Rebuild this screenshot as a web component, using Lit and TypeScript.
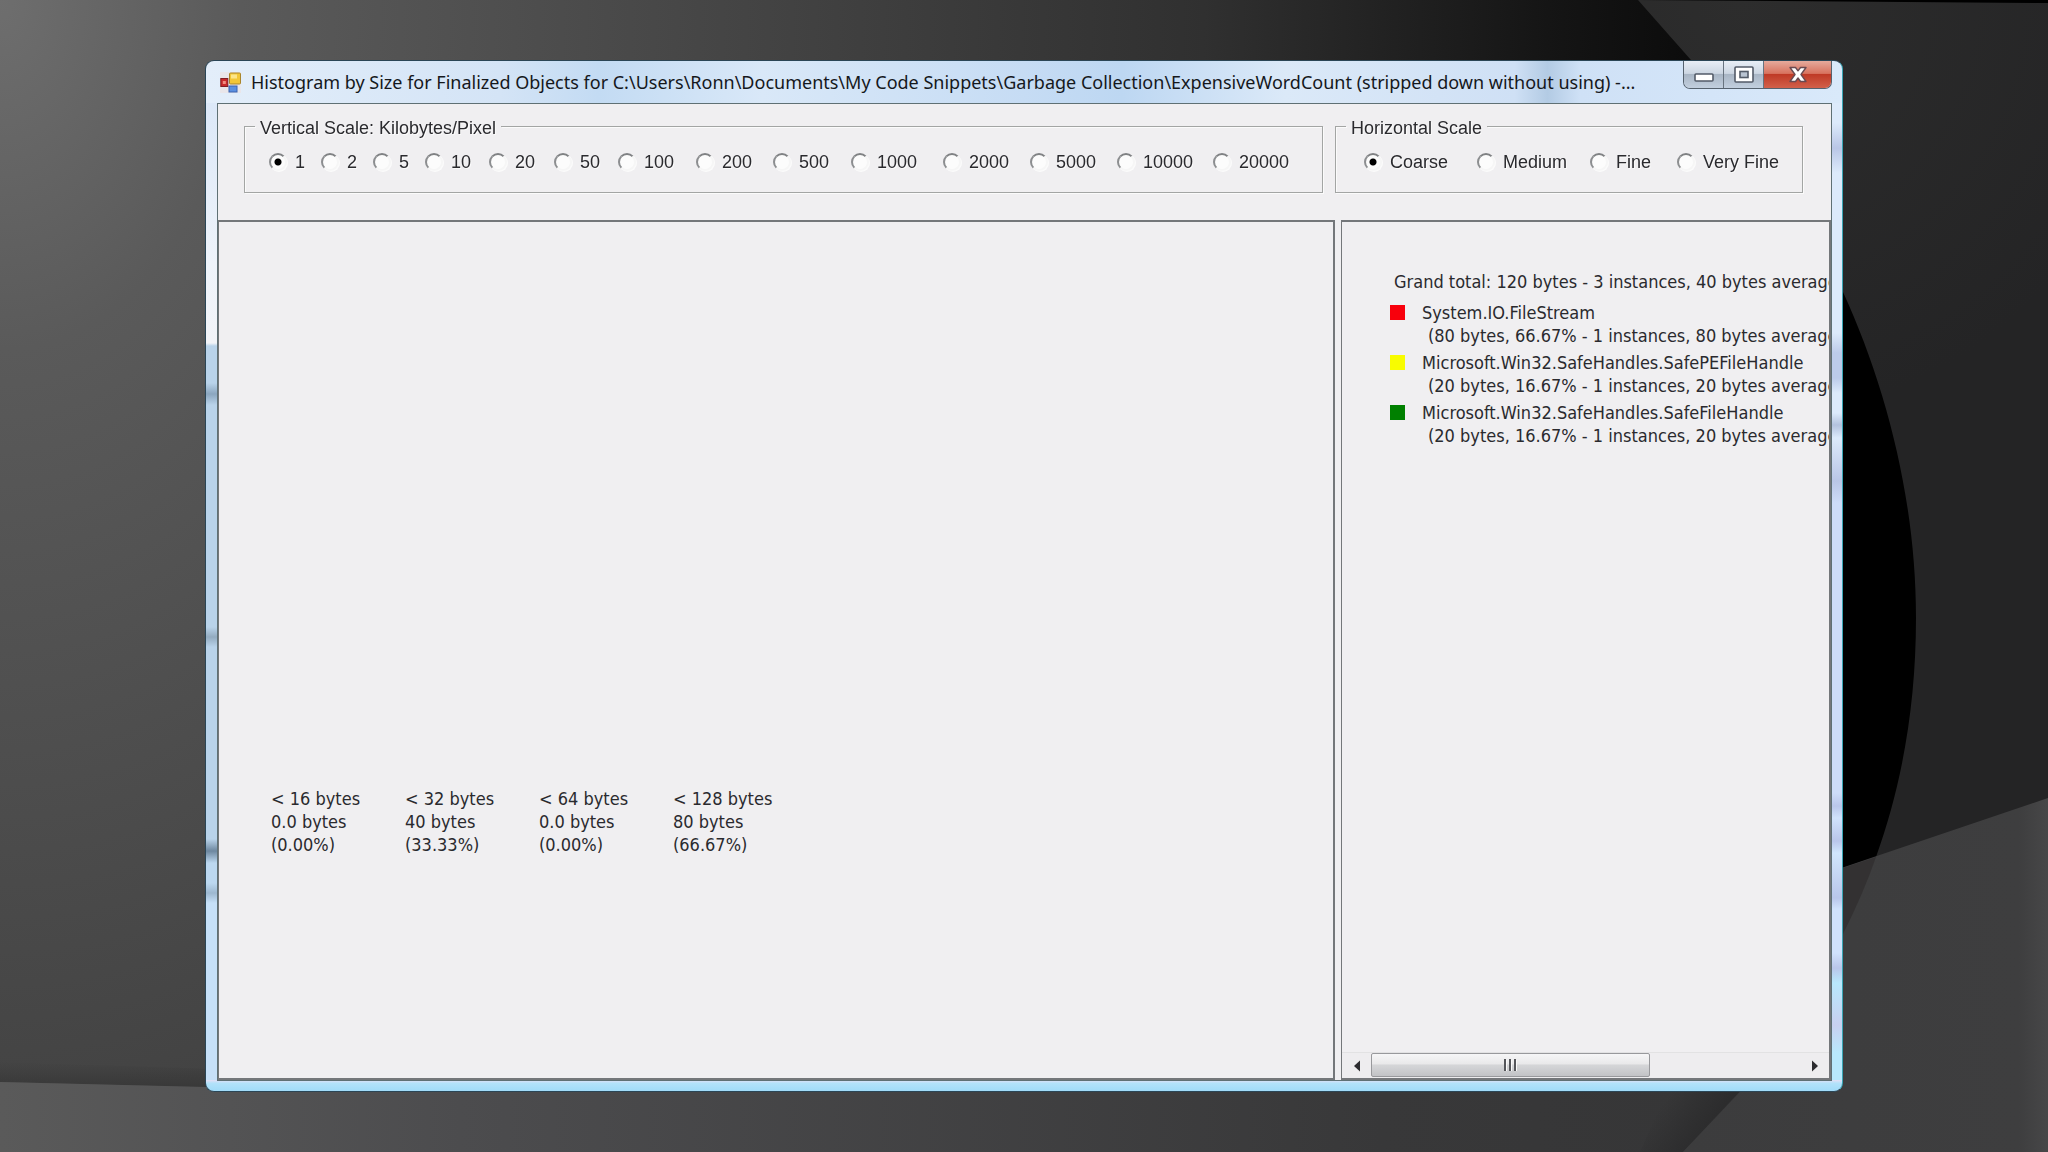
import { LitElement, html, css, svg } from "lit";
import { customElement, property, state } from "lit/decorators.js";

interface Choice {
  label: string;
  width: number;
}

const VERTICAL: Choice[] = [
  { label: "1", width: 52 },
  { label: "2", width: 52 },
  { label: "5", width: 52 },
  { label: "10", width: 64 },
  { label: "20", width: 65 },
  { label: "50", width: 64 },
  { label: "100", width: 78 },
  { label: "200", width: 77 },
  { label: "500", width: 78 },
  { label: "1000", width: 92 },
  { label: "2000", width: 87 },
  { label: "5000", width: 87 },
  { label: "10000", width: 96 },
  { label: "20000", width: 78 },
];

const HORIZONTAL: Choice[] = [
  { label: "Coarse", width: 113 },
  { label: "Medium", width: 113 },
  { label: "Fine", width: 87 },
  { label: "Very Fine", width: 108 },
];

const BUCKETS = [
  ["< 16 bytes", "0.0 bytes", "(0.00%)"],
  ["< 32 bytes", "40 bytes", "(33.33%)"],
  ["< 64 bytes", "0.0 bytes", "(0.00%)"],
  ["< 128 bytes", "80 bytes", "(66.67%)"],
];

const TYPES = [
  { color: "#f8000c", name: "System.IO.FileStream", detail: "(80 bytes, 66.67% - 1 instances, 80 bytes average)" },
  { color: "#f8fc00", name: "Microsoft.Win32.SafeHandles.SafePEFileHandle", detail: "(20 bytes, 16.67% - 1 instances, 20 bytes average)" },
  { color: "#008000", name: "Microsoft.Win32.SafeHandles.SafeFileHandle", detail: "(20 bytes, 16.67% - 1 instances, 20 bytes average)" },
];

@customElement("scale-group")
class ScaleGroup extends LitElement {
  @property() heading = "";
  @property({ attribute: false }) choices: Choice[] = [];
  @state() private selected = 0;

  static styles = css`
    :host {
      display: block;
      font: 18px/20px "Liberation Sans", Arial, sans-serif;
      color: #2a2a2e;
    }
    fieldset {
      margin: 0;
      padding: 16px 10px 20px;
      border: 1px solid #a3a5a4;
      min-width: 0;
      filter: drop-shadow(1px 1px 0 #fbfbfb);
    }
    legend {
      padding: 0 5px;
      height: 20px;
      line-height: 24px;
    }
    .row {
      display: flex;
      padding-left: var(--row-inset, 14px);
    }
    .choice {
      display: flex;
      align-items: center;
      gap: 8px;
      height: 20px;
      white-space: nowrap;
    }
    input {
      appearance: none;
      box-sizing: border-box;
      flex: none;
      width: 18px;
      height: 18px;
      margin: 0;
      border: 2px solid;
      border-color: #808284 #f6f6f6 #f6f6f6 #8c8e90;
      border-radius: 50%;
      background: #fcfcfc;
    }
    input:checked {
      background: radial-gradient(circle, #000 3px, #fcfcfc 4px);
    }
  `;

  render() {
    return html`<fieldset>
      <legend>${this.heading}</legend>
      <div class="row">
        ${this.choices.map(
          (c, i) => html`<label class="choice" style="width:${c.width}px">
            <input type="radio" name="scale" .checked=${i === this.selected} @change=${() => (this.selected = i)} />
            ${c.label}
          </label>`
        )}
      </div>
    </fieldset>`;
  }
}

const backdrop = svg`
  <defs>
    <radialGradient id="sweep" gradientUnits="userSpaceOnUse" cx="0" cy="0" r="1" gradientTransform="scale(1720 2500)">
      <stop offset="0" stop-color="#6e6e6e" />
      <stop offset="0.14" stop-color="#5a5a5a" />
      <stop offset="0.42" stop-color="#454545" />
      <stop offset="0.7" stop-color="#303030" />
      <stop offset="0.9" stop-color="#151515" />
      <stop offset="1" stop-color="#0a0a0a" />
    </radialGradient>
    <linearGradient id="floor" x1="0" x2="1">
      <stop offset="0" stop-color="#5a5a5a" />
      <stop offset="0.25" stop-color="#4c4c4e" />
      <stop offset="0.75" stop-color="#383839" />
      <stop offset="1" stop-color="#353536" />
    </linearGradient>
    <linearGradient id="edge" x1="0" y1="0" x2="0" y2="1">
      <stop offset="0" stop-color="#303030" stop-opacity="0" />
      <stop offset="1" stop-color="#303030" stop-opacity="0.8" />
    </linearGradient>
    <radialGradient id="outer" gradientUnits="userSpaceOnUse" cx="1740" cy="0" r="420">
      <stop offset="0" stop-color="#2d2d2d" />
      <stop offset="1" stop-color="#242425" />
    </radialGradient>
    <linearGradient id="crease" gradientUnits="userSpaceOnUse" x1="1672" y1="1092" x2="1712" y2="1122">
      <stop offset="0" stop-color="#2c2c2d" stop-opacity="0" />
      <stop offset="1" stop-color="#2c2c2d" />
    </linearGradient>
    <linearGradient id="corner" x1="0" x2="1">
      <stop offset="0" stop-color="#3c3c3d" />
      <stop offset="0.92" stop-color="#3e3e3f" />
      <stop offset="1" stop-color="#474748" />
    </linearGradient>
  </defs>
  <rect width="2048" height="1152" fill="url(#sweep)" />
  <path d="M1700 60H2048V1000H1700Z" fill="#000" />
  <path d="M0 1062L620 1082V1098L0 1082Z" fill="url(#edge)" />
  <path d="M0 1082L206 1087H1843V1152H0Z" fill="url(#floor)" />
  <path d="M1638 0L1691 60C1755 130 1808 212 1843 292C1886 386 1916 500 1916 618C1916 705 1902 785 1876 857L1843 934L2048 934V0Z" fill="url(#outer)" />
  <path d="M1640 0H2048V3Z" fill="#000" />
  <path d="M1670 1085H1746L1683 1152H1640Z" fill="url(#crease)" />
  <path d="M1800 882L2048 798V1152H1683L1740 1092L1800 990Z" fill="url(#corner)" />
  <path d="M1843 868L1876 857Q1864 892 1843 934Z" fill="#333132" />
`;

@customElement("app-root")
class AppRoot extends LitElement {
  static styles = css`
    :host {
      display: block;
      font: 18px/23px "DejaVu Sans Condensed", "DejaVu Sans", sans-serif;
      color: #2a2a2e;
    }
    .desktop {
      position: relative;
      display: flex;
      box-sizing: border-box;
      min-height: 100vh;
      padding: 60px 205px;
      background: #242425;
      overflow: hidden;
    }
    .backdrop {
      position: absolute;
      inset: 0;
      width: 100%;
      height: 100%;
    }
    .window {
      position: relative;
      display: flex;
      flex-direction: column;
      flex: 1;
      min-width: 0;
      box-sizing: border-box;
      padding: 0 10px 10px 11px;
      border: 1px solid #2b4656;
      border-right-color: #38a5b4;
      border-radius: 9px;
      background:
        linear-gradient(#e4e0f6, #b2e2fa 30%, #a0dbf8) bottom / 100% 11px no-repeat,
        linear-gradient(
            #dce8f8 0, #eef3fa 160px, #f2f4f8 240px, #b9d3ea 243px, #b9d3ea 280px, #8ba6bf 291px, #b9d3ea 302px,
            #b9d3ea 524px, #93abc0 534px, #b9d3ea 544px, #b9d3ea 736px, #6d879f 748px, #bcd8f0 760px,
            #bcd8f0 780px, #9db8d0 790px, #c6e0f8 800px, #c6e0f8 100%
          )
          left 42px / 11px 100% no-repeat,
        linear-gradient(
            #dceafb 0, #dceafb 20px, #b9c6e6 45px, #dceafb 70px, #dceafb 230px, #bccbea 250px, #bccbea 275px,
            #dceafb 290px, #dceafb 310px, #b3c2de 322px, #dceafb 335px, #b9c6e6 378px, #cddcf8 400px,
            #cddcf8 690px, #b9c6ea 703px, #d0e2fc 715px, #b9c6ea 738px, #d0e6fc 750px, #b9c6ea 795px,
            #d0e2fc 806px, #d0e2fc 850px, #b9c6ea 865px, #b8e8fc 880px, #c8d0f0 922px, #b8e8fc 950px
          )
          right 42px / 10px 100% no-repeat,
        linear-gradient(
            90deg, #e3eefa 0, #d4e4f6 18%, #c3dbf3 24%, #d9e8f8 34%, #c6dcf4 50%, #bdd7f2 56%, #dbe9f8 66%,
            #cfe0f5 80%, #b3cbe4 82%, #cfe1f6 84%, #d9e9fa 100%
          );
    }
    .title {
      display: flex;
      align-items: center;
      gap: 10px;
      height: 42px;
      padding-left: 3px;
    }
    .app-icon {
      flex: none;
      width: 21px;
      height: 21px;
    }
    h1 {
      flex: 1;
      min-width: 0;
      margin: 0;
      overflow: hidden;
      white-space: nowrap;
      font: 18px/26px "Noto Sans", "Open Sans", sans-serif;
      color: #15181c;
    }
    .caption {
      display: flex;
      align-self: flex-start;
      box-sizing: border-box;
      height: 28px;
      border: 1px solid #56626e;
      border-top: 0;
      border-radius: 0 0 7px 7px;
      overflow: hidden;
    }
    .caption button {
      display: grid;
      place-items: center;
      width: 40px;
      height: 27px;
      margin: 0;
      padding: 0;
      border: 0;
      border-right: 1px solid #68737f;
      background: linear-gradient(#e8eef6 0, #ccd6e2 46%, #a9b6c5 50%, #c2cfde 100%);
    }
    .caption .close {
      width: 67px;
      border-right: 0;
      background: linear-gradient(#e6aa9c 0, #d8735f 46%, #bf3a26 50%, #d2604a 100%);
    }
    .caption svg {
      width: 24px;
      height: 20px;
    }
    .client {
      display: flex;
      flex-direction: column;
      flex: 1;
      min-height: 0;
      border: 1px solid #5f7074;
      background: #f0eff1;
    }
    .tools {
      display: flex;
      gap: 12px;
      padding: 12px 28px 27px 26px;
    }
    .grow {
      flex: 1;
      min-width: 0;
    }
    .side {
      flex: 0 0 468px;
      --row-inset: 18px;
    }
    .panes {
      display: flex;
      flex: 1;
      gap: 6px;
      min-height: 0;
    }
    .pane {
      display: flex;
      flex-direction: column;
      box-sizing: border-box;
      border: 2px solid #74777a;
      border-left-width: 1px;
      min-width: 0;
    }
    .graph {
      flex: 1;
      justify-content: flex-end;
      padding: 0 52px 222px;
    }
    .buckets {
      display: grid;
      grid-template-columns: repeat(4, 134px);
    }
    .buckets p,
    .legend p {
      margin: 0;
      white-space: nowrap;
    }
    .legend-pane {
      flex: 0 0 490px;
      overflow: hidden;
    }
    .legend {
      flex: 1;
      min-height: 0;
      padding: 48px 0 0 48px;
      overflow: hidden;
    }
    .legend .total {
      padding: 0 0 8px 4px;
    }
    .entry {
      display: grid;
      grid-template-columns: 15px 1fr;
      column-gap: 17px;
      padding-bottom: 4px;
    }
    .swatch {
      width: 15px;
      height: 15px;
      margin-top: 4px;
    }
    .legend .detail {
      padding-left: 6px;
    }
    .scroll {
      display: flex;
      height: 25px;
      border-top: 1px solid #e2e2e3;
      background: #eeedef;
    }
    .scroll button {
      display: grid;
      place-items: center;
      margin: 0;
      padding: 0;
      border: 0;
      background: none;
    }
    .scroll .arrow {
      width: 29px;
    }
    .scroll .arrow svg {
      width: 8px;
      height: 12px;
    }
    .track {
      flex: 1;
      display: flex;
    }
    .scroll .thumb {
      box-sizing: border-box;
      width: 65%;
      height: 24px;
      border: 1px solid #98999c;
      border-radius: 2px;
      background: linear-gradient(#f6f6f7 0, #e9e9ea 45%, #d5d6d8 50%, #c2c3c6 100%);
    }
    .thumb svg {
      width: 14px;
      height: 12px;
    }
  `;

  render() {
    return html`<div class="desktop">
      <svg class="backdrop" viewBox="0 0 2048 1152" preserveAspectRatio="none" aria-hidden="true">${backdrop}</svg>
      <main class="window">
        <header class="title">
          <svg class="app-icon" viewBox="0 0 21 21" aria-hidden="true">
            <rect width="21" height="21" fill="#e9e6ea" />
            <rect x="9.5" y="1" width="11" height="11" rx="1" fill="#f2c637" stroke="#a9852c" />
            <rect x="11" y="2.5" width="6" height="4" fill="#fbe58a" />
            <rect x="0.8" y="6.5" width="7" height="8" fill="#c9292c" stroke="#7e1f24" />
            <rect x="2.8" y="9" width="3" height="3" fill="#f08c80" />
            <rect x="9" y="14" width="8" height="6" fill="#5b8fe0" stroke="#3b62b0" />
          </svg>
          <h1>Histogram by Size for Finalized Objects for C:\\Users\\Ronn\\Documents\\My Code Snippets\\Garbage Collection\\ExpensiveWordCount (stripped down without using) -...</h1>
          <div class="caption">
            <button aria-label="Minimize">
              <svg viewBox="0 0 24 20"><rect x="3" y="9" width="18" height="7" rx="1" fill="#fff" stroke="#535b68" stroke-width="1.6" /></svg>
            </button>
            <button aria-label="Maximize">
              <svg viewBox="0 0 24 20">
                <rect x="3" y="2" width="18" height="15" rx="1" fill="#fff" stroke="#535b68" stroke-width="1.6" />
                <rect x="8" y="6.5" width="8" height="6" fill="#b9c4d2" stroke="#535b68" stroke-width="1.6" />
              </svg>
            </button>
            <button class="close" aria-label="Close">
              <svg viewBox="0 0 24 20">
                <path d="M4 2.500h5.500L12 5.800l2.500-3.300H20L15 9.500l5 7h-5.500L12 13l-2.500 3.500H4l5-7z" fill="#fff" stroke="#6a4a50" stroke-width="1.400" stroke-linejoin="round" />
              </svg>
            </button>
          </div>
        </header>
        <div class="client">
          <div class="tools">
            <scale-group class="grow" heading="Vertical Scale: Kilobytes/Pixel" .choices=${VERTICAL}></scale-group>
            <scale-group class="side" heading="Horizontal Scale" .choices=${HORIZONTAL}></scale-group>
          </div>
          <div class="panes">
            <section class="pane graph">
              <div class="buckets">${BUCKETS.map((b) => html`<div>${b.map((line) => html`<p>${line}</p>`)}</div>`)}</div>
            </section>
            <section class="pane legend-pane">
              <div class="legend">
                <p class="total">Grand total: 120 bytes - 3 instances, 40 bytes average</p>
                ${TYPES.map(
                  (t) => html`<div class="entry">
                    <span class="swatch" style="background:${t.color}"></span>
                    <div>
                      <p>${t.name}</p>
                      <p class="detail">${t.detail}</p>
                    </div>
                  </div>`
                )}
              </div>
              <div class="scroll">
                <button class="arrow" aria-label="Scroll left">
                  <svg viewBox="0 0 8 12"><path d="M7 0.500V11.500L1 6z" fill="#2d2d30" /></svg>
                </button>
                <div class="track">
                  <button class="thumb" aria-label="Scroll position">
                    <svg viewBox="0 0 14 12">
                      <path d="M2 0V12M7 0V12M12 0V12" stroke="#55565a" stroke-width="2" />
                      <path d="M3.500 1V12M8.500 1V12M13.500 1V12" stroke="#fafafa" />
                    </svg>
                  </button>
                </div>
                <button class="arrow" aria-label="Scroll right">
                  <svg viewBox="0 0 8 12"><path d="M1 0.500V11.500L7 6z" fill="#2d2d30" /></svg>
                </button>
              </div>
            </section>
          </div>
        </div>
      </main>
    </div>`;
  }
}
